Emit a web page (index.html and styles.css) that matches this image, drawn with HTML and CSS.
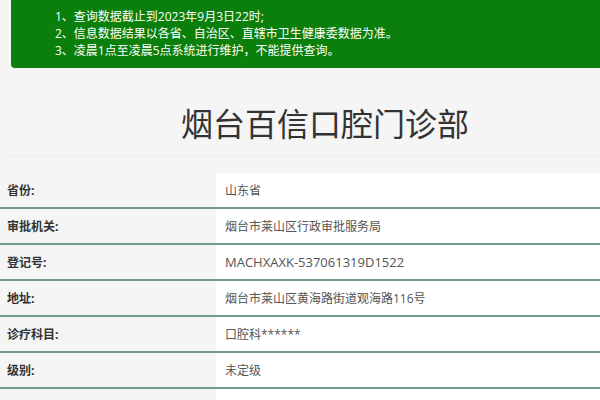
FILE: index.html
```html
<!DOCTYPE html>
<html lang="zh-CN">
<head>
<meta charset="utf-8">
<link rel="stylesheet" href="styles.css">
</head>
<body>
<div class="notice">
  <p>1、查询数据截止到2023年9月3日22时;</p>
  <p>2、信息数据结果以各省、自治区、直辖市卫生健康委数据为准。</p>
  <p>3、凌晨1点至凌晨5点系统进行维护，不能提供查询。</p>
</div>
<div class="head">
  <h1 class="title">烟台百信口腔门诊部</h1>
</div>
<div class="info">
  <div class="row"><div class="label">省份:</div><div class="value">山东省</div></div>
  <div class="row"><div class="label">审批机关:</div><div class="value">烟台市莱山区行政审批服务局</div></div>
  <div class="row"><div class="label">登记号:</div><div class="value code">MACHXAXK-537061319D1522</div></div>
  <div class="row"><div class="label">地址:</div><div class="value">烟台市莱山区黄海路街道观海路116号</div></div>
  <div class="row"><div class="label">诊疗科目:</div><div class="value">口腔科******</div></div>
  <div class="row"><div class="label">级别:</div><div class="value">未定级</div></div>
  <div class="row"><div class="label">&nbsp;</div><div class="value">&nbsp;</div></div>
</div>
</body>
</html>
```
FILE: styles.css
```css
html, body {
  margin: 0;
  padding: 0;
  background: #f5f5f5;
  font-family: "Open Sans", "Noto Sans CJK SC", sans-serif;
  color: #333;
  overflow: hidden;
}
.notice {
  margin-left: 11px;
  margin-right: -10px;
  height: 68px;
  box-sizing: border-box;
  padding: 8px 0 0 44px;
  background: #0b7f0b;
  border-bottom-left-radius: 4px;
  color: #fff;
  font-size: 12px;
  line-height: 17px;
}
.notice p {
  margin: 0;
}
.head {
  margin-left: 10px;
  height: 88px;
  box-sizing: border-box;
  padding: 20px 0 0 40px;
  border-bottom: 1px solid #ebebeb;
  display: flex;
  align-items: center;
  justify-content: center;
}
.title {
  margin: 0;
  font-family: "Noto Sans CJK SC", sans-serif;
  font-size: 32px;
  font-weight: normal;
  color: #333;
}
.info {
  margin-top: 17px;
}
.row {
  display: flex;
  height: 34px;
  border-bottom: 2px solid #6f9d88;
  font-size: 12px;
}
.label {
  width: 216px;
  padding-left: 7px;
  box-sizing: border-box;
  display: flex;
  align-items: center;
  font-weight: bold;
  color: #333;
}
.value {
  flex: 1;
  background: #fff;
  padding-left: 9px;
  display: flex;
  align-items: center;
  color: #555;
}
.value.code {
  font-size: 13px;
}
```
